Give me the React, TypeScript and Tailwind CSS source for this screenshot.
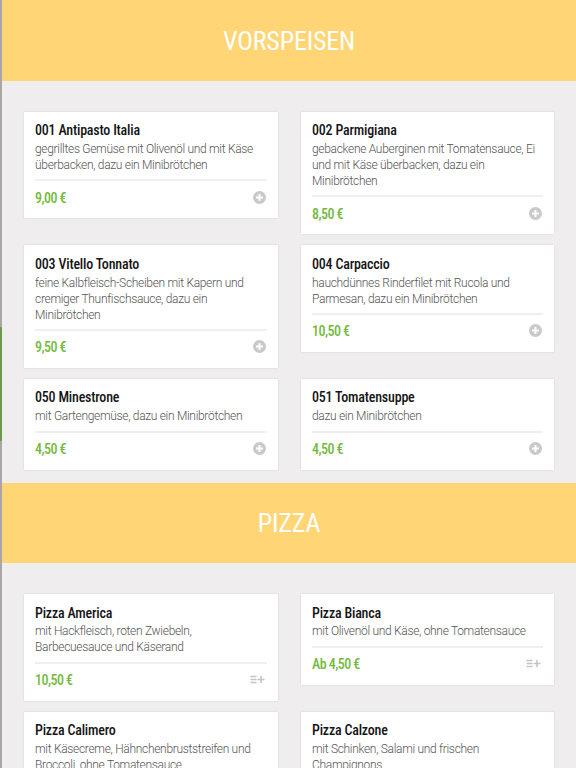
import React from 'react';

type Dish = {
  name: string;
  lines: string[];
  price: string;
  options?: boolean;
};

const starters: Dish[] = [
  { name: '001 Antipasto Italia', lines: ['gegrilltes Gemüse mit Olivenöl und mit Käse', 'überbacken, dazu ein Minibrötchen'], price: '9,00 €' },
  { name: '002 Parmigiana', lines: ['gebackene Auberginen mit Tomatensauce, Ei', 'und mit Käse überbacken, dazu ein', 'Minibrötchen'], price: '8,50 €' },
  { name: '003 Vitello Tonnato', lines: ['feine Kalbfleisch-Scheiben mit Kapern und', 'cremiger Thunfischsauce, dazu ein', 'Minibrötchen'], price: '9,50 €' },
  { name: '004 Carpaccio', lines: ['hauchdünnes Rinderfilet mit Rucola und', 'Parmesan, dazu ein Minibrötchen'], price: '10,50 €' },
  { name: '050 Minestrone', lines: ['mit Gartengemüse, dazu ein Minibrötchen'], price: '4,50 €' },
  { name: '051 Tomatensuppe', lines: ['dazu ein Minibrötchen'], price: '4,50 €' },
];

const pizzas: Dish[] = [
  { name: 'Pizza America', lines: ['mit Hackfleisch, roten Zwiebeln,', 'Barbecuesauce und Käserand'], price: '10,50 €', options: true },
  { name: 'Pizza Bianca', lines: ['mit Olivenöl und Käse, ohne Tomatensauce'], price: 'Ab 4,50 €', options: true },
  { name: 'Pizza Calimero', lines: ['mit Käsecreme, Hähnchenbruststreifen und', 'Broccoli, ohne Tomatensauce'], price: '10,50 €', options: true },
  { name: 'Pizza Calzone', lines: ['mit Schinken, Salami und frischen', 'Champignons'], price: '9,50 €', options: true },
];

const AddIcon = () => (
  <svg className="w-[13px] h-[13px] mr-[0.8px] mb-[1px]" viewBox="0 0 13 13">
    <circle cx="6.5" cy="6.5" r="6.5" fill="#cbc8cb" />
    <path d="M6.5 3v7M3 6.5h7" stroke="#fff" strokeWidth="2" />
  </svg>
);

const OptionsIcon = () => (
  <svg className="w-[15px] h-[9px] mr-[2.5px] mb-[1px]" viewBox="0 0 15 9" fill="none" stroke="#c6c4c6">
    <path d="M0.5 1.5h6M0.5 4.5h6M0.5 7.5h6" strokeWidth="1.3" />
    <path d="M11 1v7M7.5 4.5h7" strokeWidth="1.6" />
  </svg>
);

const DishCard = ({ dish }: { dish: Dish }) => (
  <article className="bg-white px-[11px] pt-[9.5px] pb-[10px] shadow-[0_0_2px_rgba(0,0,0,0.12)]">
    <h3 className="font-['Roboto_Condensed',Roboto,sans-serif] text-[14px] leading-[18px] font-medium tracking-[-0.2px] text-[#151515] whitespace-nowrap">
      {dish.name}
    </h3>
    <p className="mt-[1.8px] text-[12px] leading-4 font-light tracking-[-0.31px] text-[#555] whitespace-nowrap">
      {dish.lines.map((line) => (
        <span key={line} className="block">{line}</span>
      ))}
    </p>
    <div className="mt-[6.4px] h-[2px] bg-[#efefef]" />
    <div className="mt-[6px] h-[21px] flex items-center justify-between">
      <span className="font-['Roboto_Condensed',Roboto,sans-serif] text-[14px] leading-[18px] font-medium tracking-[-0.55px] text-[#73ba3c]">
        {dish.price}
      </span>
      {dish.options ? <OptionsIcon /> : <AddIcon />}
    </div>
  </article>
);

const MenuSection = ({ title, dishes }: { title: string; dishes: Dish[] }) => (
  <section>
    <h2 className="h-[80.8px] pt-[1.5px] flex items-center justify-center bg-[#ffd576] font-['Roboto_Condensed',Roboto,sans-serif] text-[26px] font-normal tracking-[-0.15px] text-white">
      {title}
    </h2>
    <div className="grid grid-cols-[254px_253px] gap-x-[23px] gap-y-[11px] items-start pl-[22px] pt-[30.8px] pb-[12.9px]">
      {dishes.map((dish) => (
        <DishCard key={dish.name} dish={dish} />
      ))}
    </div>
  </section>
);

export default function App() {
  return (
    <div className="w-[576px] h-[768px] overflow-hidden flex bg-[#efedee] font-[Roboto,sans-serif]">
      <div className="w-[2px] shrink-0 flex flex-col bg-[#aaa6a7]">
        <div className="h-[327px]" />
        <div className="h-[114px] bg-[#6a9a4c]" />
      </div>
      <main className="flex-1">
        <MenuSection title="VORSPEISEN" dishes={starters} />
        <MenuSection title="PIZZA" dishes={pizzas} />
      </main>
    </div>
  );
}
